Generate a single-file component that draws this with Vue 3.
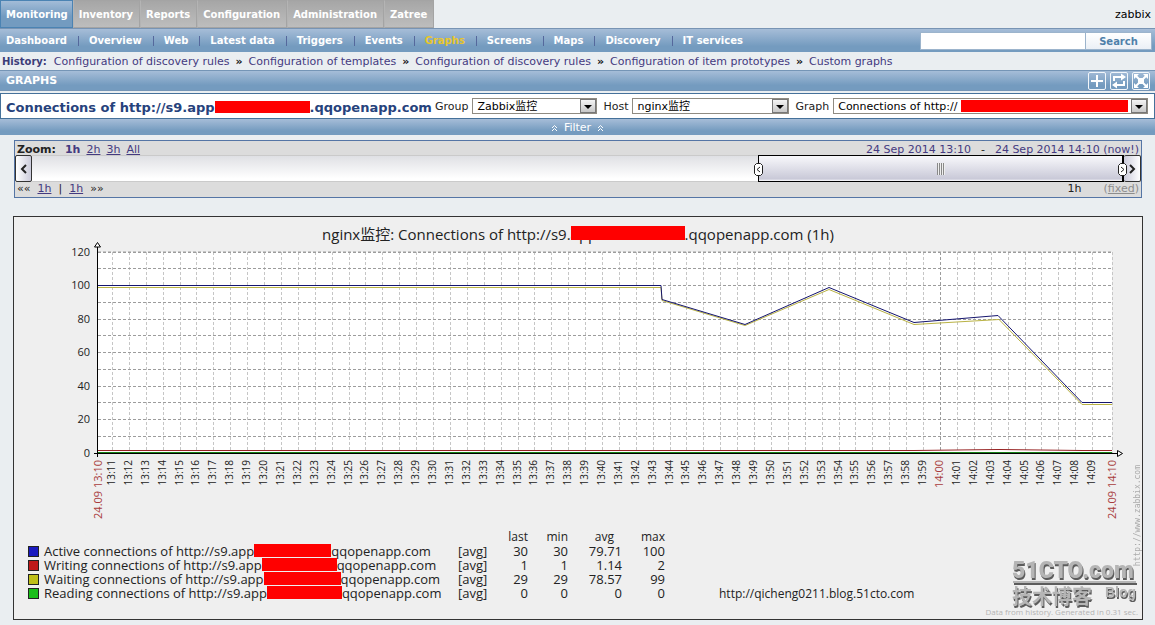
<script setup>
import { ref } from 'vue'

const tabs = ['Monitoring', 'Inventory', 'Reports', 'Configuration', 'Administration', 'Zatree']
const pages = ['Dashboard', 'Overview', 'Web', 'Latest data', 'Triggers', 'Events', 'Graphs', 'Screens', 'Maps', 'Discovery', 'IT services']
const trail = ['Configuration of discovery rules', 'Configuration of templates', 'Configuration of discovery rules', 'Configuration of item prototypes', 'Custom graphs']
const query = ref('')

const valueTop = 252
const valueBase = 453
const toY = (value) => Math.floor(valueBase - (value * (valueBase - valueTop)) / 120) + 0.5
const toX = (minute) => Math.floor(112.4 + 16.9 * (minute - 11)) + 0.5

const yLabels = [0, 20, 40, 60, 80, 100, 120]
const yLines = Array.from({ length: 12 }, (_, i) => (i + 1) * 10)
const minutes = Array.from({ length: 59 }, (_, i) => {
  const minute = i + 11
  const hour = minute < 60 ? 13 : 14
  return { x: toX(minute), label: `${hour}:${String(minute % 60).padStart(2, '0')}`, major: minute === 60 }
})

const activeLine = '98,285.5 661,285.5 662,299.5 745,324.5 829,287.5 914,322.5 998,315.5 1082,402.5 1112,402.5'
const waitingLine = '98,287.5 661,287.5 662,300.5 745,325.5 829,289.5 914,324.5 999,319.5 1082,404.5 1112,404.5'

const series = [
  { key: 'a', color: '#1a1abf', name: 'Active connections of http://s9.app', hidden: 77, last: '30', min: '30', avg: '79.71', max: '100' },
  { key: 'b', color: '#bf1a1a', name: 'Writing connections of http://s9.app', hidden: 75, last: '1', min: '1', avg: '1.14', max: '2' },
  { key: 'c', color: '#bfbf1a', name: 'Waiting connections of http://s9.app', hidden: 77, last: '29', min: '29', avg: '78.57', max: '99' },
  { key: 'd', color: '#1abf1a', name: 'Reading connections of http://s9.app', hidden: 75, last: '0', min: '0', avg: '0', max: '0' },
]
</script>

<template>
  <div class="page">
    <header class="top">
      <nav class="tabs">
        <a v-for="(t, i) in tabs" :key="t" href="#" :class="{ on: i === 0 }">{{ t }}</a>
      </nav>
      <span class="user">zabbix</span>
    </header>

    <div class="menu">
      <nav class="pages">
        <a v-for="p in pages" :key="p" href="#" :class="{ on: p === 'Graphs' }">{{ p }}</a>
      </nav>
      <form class="search" @submit.prevent>
        <input v-model="query" type="text" aria-label="Search text" />
        <button type="submit">Search</button>
      </form>
    </div>

    <div class="history">
      <b>History:</b>
      <template v-for="(h, i) in trail" :key="i">
        <i v-if="i">»</i><a href="#">{{ h }}</a>
      </template>
    </div>

    <div class="bar">
      <h1>GRAPHS</h1>
      <div class="tools">
        <button type="button" aria-label="Add to favourites">
          <svg viewBox="1 1 16 16"><path d="M9 3v12M3 9h12" stroke-width="2" /></svg>
        </button>
        <button type="button" aria-label="Refresh">
          <svg viewBox="1 1 16 16">
            <path d="M4 9V5h8M14 9v4H6" stroke-width="2" />
            <path class="solid" d="M11 1.500l5 3.500-5 3.500zM7 9.500l-5 3.500 5 3.500z" />
          </svg>
        </button>
        <button type="button" aria-label="Full screen">
          <svg viewBox="1 1 16 16">
            <path d="M4 4l10 10M14 4L4 14" stroke-width="2" />
            <path class="solid" d="M2 2h5L2 7zM16 2v5l-5-5zM2 16v-5l5 5zM16 16h-5l5-5z" />
            <path class="solid" d="M6 6h6v6H6z" />
          </svg>
        </button>
      </div>
    </div>

    <div class="chooser">
      <h2>Connections of http://s9.app<span class="mask mask-head"></span>.qqopenapp.com</h2>
      <label for="group">Group</label>
      <div class="pick pick-group"><select id="group"><option>Zabbix监控</option></select></div>
      <label for="host">Host</label>
      <div class="pick pick-host"><select id="host"><option>nginx监控</option></select></div>
      <label for="graph">Graph</label>
      <div class="pick pick-graph"><select id="graph"><option>Connections of http://</option></select><span class="cover"></span></div>
    </div>

    <button type="button" class="filter">
      <svg viewBox="0 0 7 8"><path d="M1 4l2.500-2.500L6 4M1 7l2.500-2.500L6 7" /></svg>
      Filter
      <svg viewBox="0 0 7 8"><path d="M1 4l2.500-2.500L6 4M1 7l2.500-2.500L6 7" /></svg>
    </button>

    <section class="timeline">
      <div class="line">
        <div class="zooms"><b>Zoom:</b><a class="now" href="#">1h</a><a href="#">2h</a><a href="#">3h</a><a href="#">All</a></div>
        <div class="range"><a href="#">24 Sep 2014 13:10</a><span>-</span><a href="#">24 Sep 2014 14:10 (now!)</a></div>
      </div>
      <div class="scroller">
        <button type="button" class="step" aria-label="Back"><svg viewBox="0 0 8 10"><path d="M6 1L2 5l4 4" /></svg></button>
        <div class="track">
          <div class="thumb">
            <svg class="grab grab-left" viewBox="0 0 9 13"><path d="M2.500 .5h4l2 2v8l-2 2h-4l-2-2v-8z" /><path d="M6 4L3 6.500 6 9" /></svg>
            <span class="grip"></span>
            <svg class="grab grab-right" viewBox="0 0 9 13"><path d="M2.500 .5h4l2 2v8l-2 2h-4l-2-2v-8z" /><path d="M3 4l3 2.500L3 9" /></svg>
          </div>
        </div>
        <button type="button" class="step step-next" aria-label="Forward"><svg viewBox="0 0 8 10"><path d="M2 1l4 4-4 4" /></svg></button>
      </div>
      <div class="line line-low">
        <div class="moves"><span>««</span><a href="#">1h</a><span>|</span><a href="#">1h</a><span>»»</span></div>
        <div class="span"><span>1h</span><span class="fixed">(<a href="#">fixed</a>)</span></div>
      </div>
    </section>

    <section class="graph">
      <h3>nginx监控: Connections of http://s9.<span class="mask mask-title">app</span>.qqopenapp.com (1h)</h3>
      <svg class="plot" viewBox="14 239 1128 291" role="img" aria-label="Connections over one hour">
        <rect x="98" y="252" width="1014" height="201" fill="#fff" />
        <g shape-rendering="crispEdges">
          <line v-for="m in minutes" :key="m.x" :x1="m.x" :x2="m.x" y1="252" y2="453" :class="m.major ? 'grid-major' : 'grid-minor'" />
          <line x1="1112.5" x2="1112.5" y1="252" y2="453" class="grid-minor" />
          <line v-for="v in yLines" :key="v" x1="98" x2="1112" :y1="toY(v)" :y2="toY(v)" class="grid-major" />
          <line x1="98" x2="1112" y1="251.5" y2="251.5" class="grid-minor" />
        </g>
        <polyline :points="waitingLine" class="curve waiting" />
        <polyline :points="activeLine" class="curve active" />
        <polyline points="98,450.5 914,450.5 999,449.5 1082,450.5 1112,450.5" class="curve writing" />
        <line x1="98" x2="1112" y1="452.5" y2="452.5" class="curve reading" />
        <path d="M97.500 247V457M94 453.500H1117" class="axis" />
        <path d="M97.500 242.500l3 4.500h-6zM1117.500 450.500l5 3-5 3z" class="arrow" />
        <g class="values">
          <text v-for="v in yLabels" :key="v" x="90" :y="toY(v) + 3" text-anchor="end">{{ v }}</text>
        </g>
        <g class="times">
          <text v-for="m in minutes" :key="m.label" :class="{ red: m.major }" :transform="`translate(${m.x + 2} 460) rotate(-90)`" text-anchor="end">{{ m.label }}</text>
          <text class="red" transform="translate(102 460) rotate(-90)" text-anchor="end">24.09 13:10</text>
          <text class="red" transform="translate(1116 460) rotate(-90)" text-anchor="end">24.09 14:10</text>
        </g>
      </svg>
      <table>
        <thead>
          <tr><th class="name"></th><th class="fn"></th><th>last</th><th>min</th><th class="wide">avg</th><th>max</th></tr>
        </thead>
        <tbody>
          <tr v-for="s in series" :key="s.key">
            <td class="name"><span class="swatch" :style="{ background: s.color }"></span>{{ s.name }}<span class="mask mask-row" :style="{ width: s.hidden + 'px' }"></span>qqopenapp.com</td>
            <td class="fn">[avg]</td>
            <td>{{ s.last }}</td>
            <td>{{ s.min }}</td>
            <td>{{ s.avg }}</td>
            <td>{{ s.max }}</td>
          </tr>
        </tbody>
      </table>
      <span class="blog">http://qicheng0211.blog.51cto.com</span>
      <span class="site">http://www.zabbix.com</span>
      <svg class="stamp" viewBox="0 0 126 54" aria-label="51CTO.com">
        <text x="0" y="24" class="brand">51CTO.com</text>
        <path d="M1 28h123" />
        <text x="0" y="50" class="cjk">技术博客</text>
        <text x="93" y="43" class="word">Blog</text>
      </svg>
      <span class="made">Data from history. Generated in 0.31 sec.</span>
    </section>
  </div>
</template>

<style>
body {
  background: #eaeef1;
}
</style>

<style scoped>
.page {
  font: 11px/14px Verdana, "DejaVu Sans", "Noto Sans CJK SC", sans-serif;
  color: #222;
}
a {
  text-decoration: none;
}
button {
  font: inherit;
  padding: 0;
  border-radius: 0;
}
h1,
h2,
h3 {
  margin: 0;
}
.top {
  display: flex;
  justify-content: space-between;
  align-items: stretch;
  height: 28px;
}
.tabs {
  display: flex;
}
.tabs a {
  box-sizing: border-box;
  padding: 7px 6px 0 5px;
  color: #fff;
  font-size: 10px;
  font-weight: bold;
  border: 1px solid #a4a4a4;
  border-left: 1px solid #b4b4b4;
  background: linear-gradient(#a6a6a6, #bdbdbd);
}
.tabs a.on {
  padding-right: 4px;
  border: 1px solid #4b83b3;
  background: linear-gradient(#a3bcd8, #739bc0 60%);
}
.user {
  padding: 8px 4px 0 0;
  color: #000;
}
.menu {
  display: flex;
  justify-content: space-between;
  align-items: center;
  height: 23px;
  padding: 0 3px 0 6px;
  border-top: 1px solid #7894b4;
  background: linear-gradient(#a6bdd8, #749bbf 75%);
}
.pages {
  display: flex;
  padding-top: 1px;
}
.pages a {
  color: #fff;
  font-size: 10px;
  font-weight: bold;
  line-height: 10px;
}
.pages a + a {
  margin-left: 11px;
  padding-left: 10px;
  border-left: 1px solid #55689c;
}
.pages a.on {
  color: #e9c62c;
}
.search {
  display: flex;
  height: 18px;
}
.search input {
  box-sizing: border-box;
  width: 166px;
  border: 1px solid #9cb4cc;
  background: #fff;
  font: inherit;
}
.search button {
  width: 66px;
  padding-top: 2px;
  border: 1px solid #9cb4cc;
  border-left: 0;
  background: linear-gradient(#fff, #ebf0f6);
  color: #4f80aa;
  font-size: 10px;
  font-weight: bold;
}
.history {
  display: flex;
  align-items: center;
  gap: 6px;
  box-sizing: border-box;
  height: 18px;
  padding: 2px 0 0 2px;
}
.history b {
  margin-right: 1px;
  color: #3c3c78;
  font-size: 10px;
}
.history i {
  font-style: normal;
  font-weight: bold;
  color: #111;
}
.history a,
.timeline a {
  color: #443a80;
}
.bar {
  display: flex;
  justify-content: space-between;
  align-items: center;
  height: 19px;
  padding: 0 5px 0 6px;
  border: solid #7595b6;
  border-width: 1px 0;
  background: linear-gradient(#a6bdd8, #749bbf 75%);
}
.bar h1 {
  padding-top: 1px;
  color: #fff;
  font-size: 11px;
}
.tools {
  display: flex;
  gap: 4px;
}
.tools button {
  width: 18px;
  height: 18px;
  border: 1px solid #f2f6fa;
  border-radius: 2px;
  background: none;
}
.tools svg {
  display: block;
  fill: none;
  stroke: #fff;
}
.tools .solid {
  fill: #fff;
  stroke: none;
}
.chooser {
  display: flex;
  align-items: center;
  height: 24px;
  margin-top: 2px;
  padding: 0 6px 0 5px;
  border: 1px solid #45719a;
  background: #fff;
}
.chooser h2 {
  margin-right: 3px;
  padding-top: 3px;
  color: #26427c;
  font-size: 13px;
  white-space: nowrap;
}
.chooser label {
  padding-top: 1px;
  margin-right: 4px;
}
.mask {
  position: relative;
  display: inline-block;
  vertical-align: top;
}
.mask::after {
  content: "";
  position: absolute;
  inset: 0;
  background: #f00;
}
.mask-head {
  width: 95px;
  height: 12px;
}
.pick {
  position: relative;
  margin-right: 6px;
}
.pick::after {
  content: "";
  position: absolute;
  top: 7px;
  right: 5px;
  border: 4px solid transparent;
  border-top-color: #000;
  pointer-events: none;
}
.pick::before {
  content: "";
  position: absolute;
  box-sizing: border-box;
  top: 1px;
  right: 1px;
  width: 16px;
  height: 14px;
  border: 1px solid #777;
  background: linear-gradient(#f4f4f4, #c8c8c8);
  pointer-events: none;
}
.pick select {
  appearance: none;
  display: block;
  box-sizing: border-box;
  width: 100%;
  height: 16px;
  padding: 1px 4px 0;
  border: 1px solid #8f8b82;
  border-radius: 0;
  background: #fff;
  color: #000;
  font: inherit;
}
.pick-group {
  flex: 0 1 125px;
}
.pick-host {
  flex: 0 1 157px;
}
.pick-graph {
  flex: 1;
  margin-right: 0;
}
.cover {
  position: absolute;
  top: 2px;
  left: 128px;
  right: 20px;
  height: 12px;
  background: #f00;
}
.filter {
  display: flex;
  justify-content: center;
  align-items: center;
  gap: 6px;
  width: 100%;
  height: 16px;
  padding-top: 2px;
  border: 0;
  background: linear-gradient(#a6bdd8, #749bbf 75%);
  color: #fff;
}
.filter svg {
  width: 7px;
  height: 8px;
  fill: none;
  stroke: #fff;
}
.timeline {
  margin: 5px 13px 0 14px;
  border: 1px solid #5575a5;
  background: #dcdcdc;
}
.line,
.line > div {
  display: flex;
  justify-content: space-between;
}
.line {
  height: 14px;
  padding: 0 2px;
}
.line-low {
  height: 15px;
}
.line > div {
  gap: 10px;
  line-height: 17px;
}
.timeline a {
  text-decoration: underline;
}
.timeline .now,
.timeline .range a {
  text-decoration: none;
}
.zooms b {
  margin-right: 3px;
}
.now {
  font-weight: bold;
}
.line .zooms {
  gap: 6px;
}
.line .moves,
.line .span {
  gap: 7px;
  line-height: 13px;
}
.line .span {
  gap: 22px;
}
.line .fixed,
.timeline .fixed a {
  color: #8d8d8d;
}
.scroller {
  display: flex;
  height: 27px;
}
.step {
  width: 17px;
  border: 1px solid #333;
  border-radius: 2px;
  background: linear-gradient(90deg, #fff, #cbcbdb);
}
.step-next {
  border-left: 0;
  background: linear-gradient(90deg, #cbcbdb, #fff);
}
.step svg {
  display: block;
  width: 8px;
  height: 10px;
  margin: auto;
  fill: none;
  stroke: #222;
  stroke-width: 2px;
}
.track {
  display: flex;
  flex: 1;
  justify-content: flex-end;
  border: solid #cacaca;
  border-width: 1px 0;
  background: linear-gradient(#dfe0e4, #fff 90%);
}
.thumb {
  position: relative;
  display: flex;
  justify-content: center;
  align-items: center;
  box-sizing: border-box;
  width: 33.5%;
  margin: -1px 0;
  border: 1px solid #000;
  border-right-width: 2px;
  background: linear-gradient(#f8f8fb, #c9c9d8 92%, #fff);
}
.grab {
  position: absolute;
  top: 7px;
  width: 9px;
  height: 13px;
  fill: #fff;
  stroke: #222;
}
.grab-left {
  left: -5px;
}
.grab-right {
  right: -5px;
}
.grip {
  width: 8px;
  height: 12px;
  background: repeating-linear-gradient(90deg, #888 0 1px, #eee 1px 2px);
}
.graph {
  position: relative;
  margin: 18px 12px 5px 13px;
  padding-bottom: 19px;
  border: 1px solid #333;
  background: #efefef;
  font-family: "Open Sans", "Noto Sans CJK SC", sans-serif;
}
.graph h3 {
  padding-top: 7px;
  font-size: 15px;
  font-weight: normal;
  line-height: 20px;
  height: 15px;
  text-align: center;
  white-space: nowrap;
}
.mask-title {
  width: 114px;
  text-align: left;
}
.mask-title::after {
  top: 2px;
  bottom: 4px;
}
.plot {
  display: block;
  width: 100%;
}
.grid-minor {
  stroke: #c6c6c6;
  stroke-dasharray: 3 2;
}
.grid-major {
  stroke: #9c9c9c;
  stroke-dasharray: 3 2;
}
.curve {
  fill: none;
}
.active {
  stroke: #15156e;
}
.waiting {
  stroke: #b9b244;
}
.writing {
  stroke: #962222;
}
.reading {
  stroke: #168016;
}
.axis {
  fill: none;
  stroke: #000;
}
.arrow {
  fill: #fff;
  stroke: #000;
}
.values text {
  font-size: 11px;
  fill: #222;
}
.times text {
  font-size: 10px;
  fill: #222;
}
.times .red {
  font-size: 11px;
  fill: #a83c3c;
}
table {
  margin-left: 14px;
  border-collapse: collapse;
  font-size: 13px;
  line-height: 14px;
}
th,
td {
  box-sizing: border-box;
  height: 14px;
  width: 40px;
  padding: 0;
  font-weight: normal;
  text-align: right;
  white-space: nowrap;
}
th {
  font-size: 12px;
}
th.wide {
  width: 54px;
  padding-right: 8px;
}
th:last-child,
td:last-child {
  width: 43px;
}
th.name,
td.name {
  width: 430px;
  text-align: left;
}
th.fn,
td.fn {
  width: 30px;
  text-align: left;
}
.swatch {
  display: inline-block;
  box-sizing: border-box;
  width: 11px;
  height: 11px;
  margin-right: 5px;
  border: 1px solid #222;
  vertical-align: -1px;
}
.mask-row {
  height: 13px;
}
.blog {
  position: absolute;
  left: 705px;
  bottom: 18px;
  font-size: 12px;
}
.site {
  position: absolute;
  right: 0;
  top: 248px;
  color: #aaa;
  font: 8px/9px "DejaVu Sans Mono", monospace;
  writing-mode: vertical-rl;
  transform: rotate(180deg);
}
.stamp {
  position: absolute;
  right: 4px;
  bottom: 11px;
  width: 126px;
  height: 54px;
  fill: #b5b5b5;
  stroke: #b5b5b5;
  filter: drop-shadow(1px 2px 0 #5c5c5c);
}
.stamp text {
  stroke-width: 0;
}
.stamp path {
  stroke-width: 2px;
}
.stamp .brand {
  font: 900 23px Roboto, sans-serif;
}
.stamp .cjk {
  font: bold 20px "Noto Sans CJK SC", sans-serif;
}
.stamp .word {
  font: bold 14px "Liberation Sans", sans-serif;
}
.made {
  position: absolute;
  right: 4px;
  bottom: 0;
  color: #b4b4b4;
  font-size: 8px;
}
</style>
